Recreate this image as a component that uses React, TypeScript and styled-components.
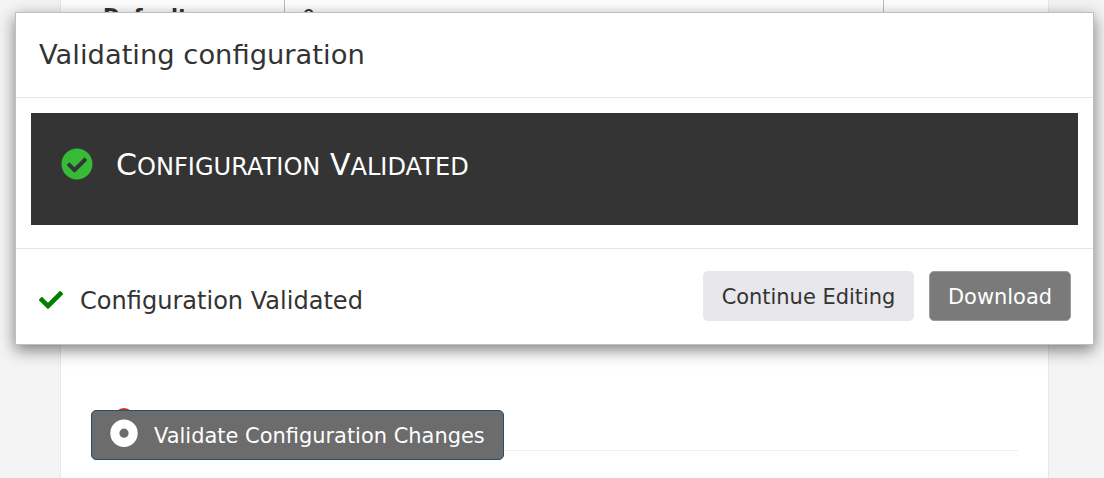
import React from 'react';
import styled, { createGlobalStyle } from 'styled-components';
import { FaCheck, FaCheckCircle } from 'react-icons/fa';

const GlobalStyle = createGlobalStyle`
  * { box-sizing: border-box; }
  body {
    margin: 0;
    background: #f4f4f4;
    color: #333;
    font-family: "DejaVu Sans", Verdana, sans-serif;
    overflow: hidden;
  }
`;

const Screen = styled.div`
  position: relative;
  height: 478px;
  overflow: hidden;
`;

const Page = styled.main`
  display: flex;
  flex-direction: column;
  height: 478px;
  margin: 0 55px 0 60px;
  padding: 0 30px;
  background: #fff;
  border: solid #e7e7e7;
  border-width: 0 1px;
`;

const SettingsRow = styled.div`
  display: grid;
  grid-template-columns: 194px 599px 1fr;
  height: 60px;
`;

const Cell = styled.div<{ $label?: boolean }>`
  padding-top: ${(p) => (p.$label ? 2 : 3)}px;
  padding-left: ${(p) => (p.$label ? 12 : 17)}px;
  border-right: ${(p) => (p.$label === undefined ? 0 : 1)}px solid #bbb;
  font-size: ${(p) => (p.$label ? 20.4 : 21)}px;
  line-height: 30px;
  font-weight: ${(p) => (p.$label ? 700 : 400)};
`;

const Divider = styled.hr`
  width: 927px;
  height: 1px;
  margin: 390px 0 0;
  border: 0;
  background: #eee;
`;

const Marker = styled.span`
  position: absolute;
  left: 114px;
  top: 408px;
  width: 20px;
  height: 20px;
  border-radius: 50%;
  background: #c9342b;
`;

const ValidateButton = styled.button`
  position: absolute;
  left: 91px;
  top: 410px;
  display: flex;
  align-items: center;
  gap: 16px;
  width: 413px;
  height: 50px;
  padding: 1px 18px 0;
  border: 1px solid #24506f;
  border-radius: 5px;
  background: #6c6c6c;
  color: #fff;
  font: 20.95px "DejaVu Sans", sans-serif;
  white-space: nowrap;

  svg { flex: none; margin-top: -5px; }
`;

const Modal = styled.section`
  position: absolute;
  left: 15px;
  top: 12px;
  width: 1079px;
  height: 333px;
  background: #fff;
  border: 1px solid #bfbfbf;
  box-shadow: 0 5px 15px rgba(0, 0, 0, 0.5);
`;

const Header = styled.header`
  height: 85px;
  padding: 23px 23px 0;
  border-bottom: 1px solid #e5e5e5;
`;

const Title = styled.h4`
  margin: 0;
  font-size: 27.35px;
  line-height: 38px;
  font-weight: 400;
`;

const Body = styled.div`
  height: 150px;
  padding: 15px 15px 0;
`;

const Banner = styled.div`
  display: flex;
  gap: 23px;
  height: 112px;
  padding: 35px 30px 0;
  background: #343434;

  svg { color: #36bb36; flex: none; }
`;

const BannerText = styled.span`
  color: #fff;
  font-size: 24.1px;
  line-height: 34px;
  white-space: nowrap;
`;

const Initial = styled.span`
  font-size: 30px;
`;

const Footer = styled.footer`
  display: flex;
  gap: 15px;
  height: 96px;
  padding: 22px 22px 0 23px;
  border-top: 1px solid #e5e5e5;
`;

const Status = styled.div`
  display: flex;
  align-items: center;
  gap: 17px;
  height: 58px;
  margin-right: auto;
  font-size: 24.05px;

  svg { color: #008000; }
`;

const StatusText = styled.span`
  padding-top: 2px;
`;

const Button = styled.button<{ $dark?: boolean }>`
  width: ${(p) => (p.$dark ? 142 : 211)}px;
  height: 50px;
  padding: 1px 0 0;
  border: 1px solid ${(p) => (p.$dark ? '#9b9b9b' : '#e8e7ec')};
  border-radius: 5px;
  background: ${(p) => (p.$dark ? '#7a7a7a' : '#e8e7ec')};
  color: ${(p) => (p.$dark ? '#fff' : '#333')};
  font: 20.95px "DejaVu Sans", sans-serif;
`;

export default function App() {
  return (
    <Screen>
      <GlobalStyle />
      <Page>
        <SettingsRow>
          <Cell $label>Default</Cell>
          <Cell $label={false}>0</Cell>
          <Cell />
        </SettingsRow>
        <Divider />
      </Page>
      <Marker />
      <ValidateButton>
        <svg width="28" height="28" viewBox="0 0 28 28">
          <path
            fill="#fff"
            fillRule="evenodd"
            d="M14 .5a13.7 13.7 0 1 0 0 27.4 13.7 13.7 0 0 0 0-27.4zm0 9.1a4.6 4.6 0 1 1 0 9.2 4.6 4.6 0 0 1 0-9.2z"
          />
        </svg>
        Validate Configuration Changes
      </ValidateButton>
      <Modal>
        <Header>
          <Title>Validating configuration</Title>
        </Header>
        <Body>
          <Banner>
            <FaCheckCircle size={32} />
            <BannerText>
              <Initial>C</Initial>ONFIGURATION<Initial> V</Initial>ALIDATED
            </BannerText>
          </Banner>
        </Body>
        <Footer>
          <Status>
            <FaCheck size={24} />
            <StatusText>Configuration Validated</StatusText>
          </Status>
          <Button>Continue Editing</Button>
          <Button $dark>Download</Button>
        </Footer>
      </Modal>
    </Screen>
  );
}
